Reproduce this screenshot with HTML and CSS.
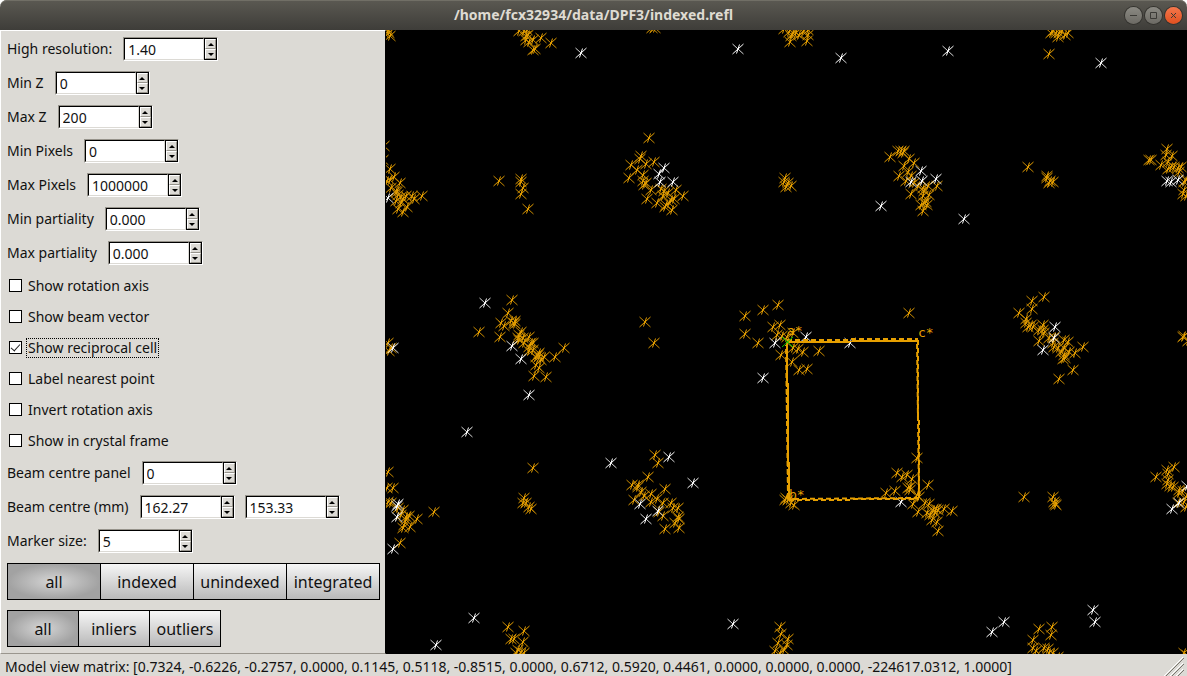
FILE: index.html
```html
<!DOCTYPE html>
<html lang="en">
<head>
<meta charset="utf-8">
<title>/home/fcx32934/data/DPF3/indexed.refl</title>
<link rel="stylesheet" href="styles.css">
</head>
<body>
<div class="window">
  <header class="titlebar">
    <h1 class="title">/home/fcx32934/data/DPF3/indexed.refl</h1>
    <div class="window-controls">
      <button class="wm" aria-label="Minimize"><svg viewBox="0 0 17 17"><path d="M5 8.500h7"/></svg></button>
      <button class="wm" aria-label="Maximize"><svg viewBox="0 0 17 17"><path d="M5.500 5.500h6v6h-6z"/></svg></button>
      <button class="wm wm-close" aria-label="Close"><svg viewBox="0 0 17 17"><path d="M6 6l5 5M11 6l-5 5"/></svg></button>
    </div>
  </header>

  <main class="main">
    <form class="panel">
      <div class="row"><label for="hires">High resolution:</label>
        <span class="spin"><input id="hires" type="text" value="1.40"><span class="steps"><button type="button" class="up" aria-label="Increase"></button><button type="button" class="down" aria-label="Decrease"></button></span></span></div>
      <div class="row"><label for="minz">Min Z</label>
        <span class="spin"><input id="minz" type="text" value="0"><span class="steps"><button type="button" class="up" aria-label="Increase"></button><button type="button" class="down" aria-label="Decrease"></button></span></span></div>
      <div class="row"><label for="maxz">Max Z</label>
        <span class="spin"><input id="maxz" type="text" value="200"><span class="steps"><button type="button" class="up" aria-label="Increase"></button><button type="button" class="down" aria-label="Decrease"></button></span></span></div>
      <div class="row"><label for="minpx">Min Pixels</label>
        <span class="spin"><input id="minpx" type="text" value="0"><span class="steps"><button type="button" class="up" aria-label="Increase"></button><button type="button" class="down" aria-label="Decrease"></button></span></span></div>
      <div class="row"><label for="maxpx">Max Pixels</label>
        <span class="spin"><input id="maxpx" type="text" value="1000000"><span class="steps"><button type="button" class="up" aria-label="Increase"></button><button type="button" class="down" aria-label="Decrease"></button></span></span></div>
      <div class="row"><label for="minpart">Min partiality</label>
        <span class="spin"><input id="minpart" type="text" value="0.000"><span class="steps"><button type="button" class="up" aria-label="Increase"></button><button type="button" class="down" aria-label="Decrease"></button></span></span></div>
      <div class="row"><label for="maxpart">Max partiality</label>
        <span class="spin"><input id="maxpart" type="text" value="0.000"><span class="steps"><button type="button" class="up" aria-label="Increase"></button><button type="button" class="down" aria-label="Decrease"></button></span></span></div>

      <label class="check"><input type="checkbox"><span>Show rotation axis</span></label>
      <label class="check"><input type="checkbox"><span>Show beam vector</span></label>
      <label class="check focused"><input type="checkbox" checked><span>Show reciprocal cell</span></label>
      <label class="check"><input type="checkbox"><span>Label nearest point</span></label>
      <label class="check"><input type="checkbox"><span>Invert rotation axis</span></label>
      <label class="check"><input type="checkbox"><span>Show in crystal frame</span></label>

      <div class="row"><label for="bpanel">Beam centre panel</label>
        <span class="spin"><input id="bpanel" type="text" value="0"><span class="steps"><button type="button" class="up" aria-label="Increase"></button><button type="button" class="down" aria-label="Decrease"></button></span></span></div>
      <div class="row"><label for="bx">Beam centre (mm)</label>
        <span class="spin"><input id="bx" type="text" value="162.27"><span class="steps"><button type="button" class="up" aria-label="Increase"></button><button type="button" class="down" aria-label="Decrease"></button></span></span>
        <span class="spin"><input id="by" type="text" value="153.33" aria-label="Beam centre slow axis (mm)"><span class="steps"><button type="button" class="up" aria-label="Increase"></button><button type="button" class="down" aria-label="Decrease"></button></span></span></div>
      <div class="row"><label for="marker">Marker size:</label>
        <span class="spin"><input id="marker" type="text" value="5"><span class="steps"><button type="button" class="up" aria-label="Increase"></button><button type="button" class="down" aria-label="Decrease"></button></span></span></div>

      <div class="segments">
        <button type="button" aria-pressed="true">all</button>
        <button type="button" aria-pressed="false">indexed</button>
        <button type="button" aria-pressed="false">unindexed</button>
        <button type="button" aria-pressed="false">integrated</button>
      </div>
      <div class="segments compact">
        <button type="button" aria-pressed="true">all</button>
        <button type="button" aria-pressed="false">inliers</button>
        <button type="button" aria-pressed="false">outliers</button>
      </div>
    </form>

    <div class="view">
      <svg class="plot" viewBox="386 30 801 624" preserveAspectRatio="xMinYMin slice" role="img" aria-label="Reciprocal lattice">
        <defs>
          <marker id="mo" markerUnits="userSpaceOnUse" markerWidth="14" markerHeight="14" viewBox="-7 -7 14 14" overflow="visible">
            <path class="arm orange-dim" d="M-5.500-5L5.500 5"/><path class="arm orange" d="M-5.500 5L5.500-5M1.500-4.500L-1.500 4.500"/>
          </marker>
          <marker id="mw" markerUnits="userSpaceOnUse" markerWidth="14" markerHeight="14" viewBox="-7 -7 14 14" overflow="visible">
            <path class="arm white-dim" d="M-5.500-5L5.500 5"/><path class="arm white" d="M-5.500 5L5.500-5M1.500-4.500L-1.500 4.500"/>
          </marker>
        </defs>
        <!-- indexed reflections -->
        <polyline class="indexed" points="
          389,33 388,31 390,36 519,31 524,31 527,30 528,35 526,40 533,40 541,38 529,42 533,50 535,49 526,36 551,43
          384,146 383,160 390,169 394,177 390,180 387,181 400,183 391,188 396,191 398,195 401,197 403,199 396,201 406,196 412,196 414,199 422,196 407,207 398,209 403,212 401,203 397,192
          499,181 521,179 521,182 523,188 521,194 528,209
          652,28 655,28 649,138 641,156 640,159 646,164 654,162 631,165 637,170 629,178 643,175 643,181 646,183 644,185 651,190 647,199 661,189 664,191 668,193 663,196 676,190 683,196 674,199 671,200 657,203 666,205 669,203 665,207 672,210
          784,29 789,32 793,33 796,33 799,35 808,35 803,32 808,30 790,42 807,41 791,36 785,178 788,183 784,182 791,186 786,187
          890,157 898,151 901,151 904,151 903,153 909,159 914,163 904,166 908,172 899,176 906,181 911,176 914,183 918,186 911,194 923,188 924,191 928,186 929,195 923,196 937,186 924,203 926,202 927,205 923,211 921,205
          1051,33 1056,33 1059,33 1058,37 1065,35 1068,33 1053,31 1062,31 1049,54 1028,167 1047,178 1050,181 1053,182 1049,183 1047,176
          1167,149 1151,160 1149,160 1166,155 1172,156 1161,165 1168,162 1171,167 1168,169 1174,167 1178,168 1181,167 1179,172 1184,182 1186,180 1184,190 1183,194 1186,196
          512,300 479,332 508,313 501,323 500,337 504,326 511,321 514,323 515,321 515,324 521,332 519,335 518,338 519,340 523,338 529,337 524,343 531,343 529,347 533,343 529,351 533,350 539,353 538,355 539,357 544,357 536,357 541,360 536,365 539,368 534,376 546,377 555,357 564,348
          388,343 391,348 389,351 645,322 654,343
          745,316 763,310 778,305 745,334 758,343 773,327 780,325 777,335 782,336 793,333 787,337 781,355 793,348 798,349 803,352 819,351 792,362 799,370 807,369 909,313
          917,458 897,473 902,477 907,475 912,479 886,493 895,491 910,487 910,490 908,488 917,495 919,497 928,485 913,504 918,512 925,503 929,504 933,510 936,509 930,515 927,513 935,513 938,510 944,509 952,511 932,520 937,522 938,531
          785,500 788,500 786,498 791,503 794,505
          1044,297 1032,301 1032,309 1019,313 1026,319 1026,323 1028,327 1031,325 1033,327 1039,330 1043,325 1043,330 1044,333 1039,341 1049,338 1054,337 1053,343 1054,347 1058,348 1064,340 1068,342 1064,348 1061,352 1064,355 1065,358 1063,359 1069,352 1075,353 1083,347 1073,370 1059,379 1183,337 1184,336 1188,341
          1174,467 1167,470 1156,477 1168,474 1168,480 1167,484 1170,486 1173,487 1179,490 1179,493 1183,491 1178,503 1184,502 1186,497 1186,507 1024,497 1053,497 1054,502 1055,504 1056,505
          1039,629 1052,627 1051,635 1033,640 1033,648 1036,651 1044,648 1048,649 1049,653 1053,653 1058,657 1184,653 1187,655
          388,472 393,488 387,488 388,502 391,503 398,508 403,510 401,515 406,517 409,516 406,520 417,519 410,527 403,528 404,525 434,512 400,543
          533,468 524,498 523,503 526,503 529,507 531,509
          655,455 658,463 648,477 632,485 638,485 638,487 641,492 634,500 644,496 651,494 651,502 657,499 665,489 663,503 671,503 673,508 678,508 663,516 678,517 679,519 675,523 679,528 665,529 659,512
          508,627 524,631 511,639 514,639 523,642 518,650 521,652 524,653 516,653
          780,627 788,639 778,643 787,645 775,651 784,650 781,634 780,653"/>
        <!-- unindexed reflections -->
        <polyline class="unindexed" points="
          581,53 738,49 841,58 948,51 1101,63 881,206 964,219 388,198 664,168 659,174 660,182 673,182
          921,171 911,182 922,181 936,179 1167,181 1171,182 1178,180 485,303 512,346 521,359 529,395 467,432 393,348
          775,343 806,337 850,343 763,378 901,502 1055,327 1054,338 1043,350 1187,486 1179,503 1172,509
          1093,610 1095,622 1004,622 992,632 398,504 397,506 397,517 393,549 611,463 669,457 693,483
          640,504 658,511 646,519 474,618 436,645 733,624"/>
        <!-- reciprocal cell -->
        <path class="cell" d="M787 342L789 500M787 342L918 341"/>
        <path class="cell dashed" d="M787 340L918 339M918 340L919 498M789 500L919 499M787 342L788 500"/>
        <path class="cell-fine" d="M917 340L919 498M790 499L918 498M786 345L788 498"/>
        <path class="origin" d="M782 337L793 347M782 347L793 337"/>
        <g class="axis-label"><text x="787" y="335">a*</text><text x="918" y="337">c*</text><text x="789" y="499">b*</text></g>
      </svg>
    </div>
  </main>

  <footer class="status">
    <span>Model view matrix: [0.7324, -0.6226, -0.2757, 0.0000, 0.1145, 0.5118, -0.8515, 0.0000, 0.6712, 0.5920, 0.4461, 0.0000, 0.0000, 0.0000, -224617.0312, 1.0000]</span>
    <svg class="grip" viewBox="0 0 20 20" aria-hidden="true">
      <path class="grip-light" d="M0 19L19 0M6 19L19 6M12 19L19 12"/>
      <path class="grip-dark" d="M1 20L20 1M7 20L20 7M13 20L20 13"/>
    </svg>
  </footer>
</div>
</body>
</html>
```

FILE: styles.css
```css
* { box-sizing: border-box; }

body {
  margin: 0;
  background: #fff;
  color: #111;
  font: 14px/20px "Noto Sans", "Open Sans", sans-serif;
}

button, input { font: inherit; color: inherit; margin: 0; padding: 0; border-radius: 0; }

.window { display: flex; flex-direction: column; min-height: 100vh; }

/* title bar */
.titlebar {
  display: grid;
  grid-template-columns: 1fr auto 1fr;
  align-items: center;
  height: 30px;
  padding: 0 5px;
  border-radius: 7px 7px 0 0;
  background: linear-gradient(#5b5952, #3e3d39);
  box-shadow: inset 0 1px #716f66;
}
.title { grid-column: 2; margin: 0; font-size: 14px; font-weight: 700; color: #dfdbd2; }
.window-controls { display: flex; justify-content: flex-end; gap: 3px; }
.wm {
  width: 17px; height: 17px;
  border: 0; border-radius: 50%;
  background: linear-gradient(#8b8a83, #6c6a64);
  box-shadow: 0 0 0 1px #34332f;
}
.wm svg { display: block; width: 17px; height: 17px; fill: none; stroke: #3b3a36; }
.wm-close { background: linear-gradient(#f5774c, #e1501f); }

.main { display: flex; flex: 1; }

/* control panel */
.panel {
  flex: none;
  min-width: 386px;
  padding: 1px 5px 6px 6px;
  background: #dcdad5;
  border: 1px solid;
  border-color: #fff #000 #9a968e #fff;
}
.row { display: flex; align-items: center; gap: 10px; height: 34px; }
.row label { margin-right: 1px; }

.spin {
  display: flex;
  width: 95px; height: 24px;
  border: 1px solid;
  border-color: #96938b #fff #fff #96938b;
}
.spin input {
  flex: 1;
  min-width: 0;
  padding: 2px 0 0 3px;
  border: 1px solid;
  border-color: #000 #dcdad5 #dcdad5 #000;
  background: #fff;
  outline: 0;
}
.steps { display: flex; flex-direction: column; width: 13px; border: 1px solid #000; }
.steps button {
  display: grid;
  place-items: center;
  flex: 1;
  background: #dcdad5;
  border: 1px solid;
  border-color: #fff #96938b #96938b #fff;
}
.steps button::before { content: ""; border: 0 solid transparent; border-width: 0 3px; }
.steps .up::before { border-bottom: 3px solid #000; }
.steps .down::before { border-top: 3px solid #000; }

.check { display: flex; align-items: center; gap: 4px; height: 31px; padding-left: 2px; }
.check input {
  appearance: none;
  display: grid;
  place-items: center;
  width: 13px; height: 13px;
  border: 1px solid #000;
  background: #fff;
}
.check input:checked::before {
  content: "";
  width: 8px; height: 4px;
  border: solid #222;
  border-width: 0 0 1px 1px;
  transform: translateY(-1px) rotate(-48deg);
}
.check span { padding: 0 1px; border: 1px dotted transparent; line-height: 18px; }
.check.focused span { border-color: #000; }

.segments {
  display: grid;
  grid-auto-flow: column;
  grid-auto-columns: 1fr;
  margin-top: 5px;
  border: solid #000;
  border-width: 1px 1px 1px 0;
}
.segments.compact { width: fit-content; margin-top: 10px; }
.segments button {
  min-width: 71px;
  height: 35px;
  padding: 0 5px;
  border: 0;
  border-left: 1px solid #000;
  background: linear-gradient(#f6f6f6, #b9b9b9);
  font-size: 16px;
}
.segments button[aria-pressed="true"] {
  background: radial-gradient(ellipse farthest-side, #d6d6d6, #a2a2a2);
}

/* lattice view */
.view { position: relative; flex: 1; min-width: 0; background: #000; overflow: hidden; }
.plot { position: absolute; inset: 0; width: 100%; height: 100%; }
.plot polyline { fill: none; stroke: none; }
.indexed { marker: url(#mo); }
.unindexed { marker: url(#mw); }
.arm { fill: none; stroke-width: 1; }
.orange { stroke: #e69f00; }
.orange-dim { stroke: #c98b00; }
.white { stroke: #fff; }
.white-dim { stroke: #d8d8d8; }
.cell { fill: none; stroke: #e69f00; stroke-width: 2; shape-rendering: crispEdges; }
.cell-fine { fill: none; stroke: #e69f00; stroke-width: 2; stroke-dasharray: 5 3; stroke-dashoffset: 4; }
.dashed { stroke-dasharray: 5 3; }
.origin { fill: none; stroke: #00c800; stroke-width: 1; }
.axis-label { fill: #e69f00; font: 13px "DejaVu Sans Mono", monospace; }

/* status bar */
.status {
  display: flex;
  justify-content: space-between;
  align-items: center;
  height: 22px;
  padding: 3px 3px 0 5px;
  background: #dcdad5;
  overflow: hidden;
  white-space: nowrap;
}
.grip { flex: none; width: 20px; height: 20px; fill: none; }
.grip-light { stroke: #fff; }
.grip-dark { stroke: #77746c; }
```
